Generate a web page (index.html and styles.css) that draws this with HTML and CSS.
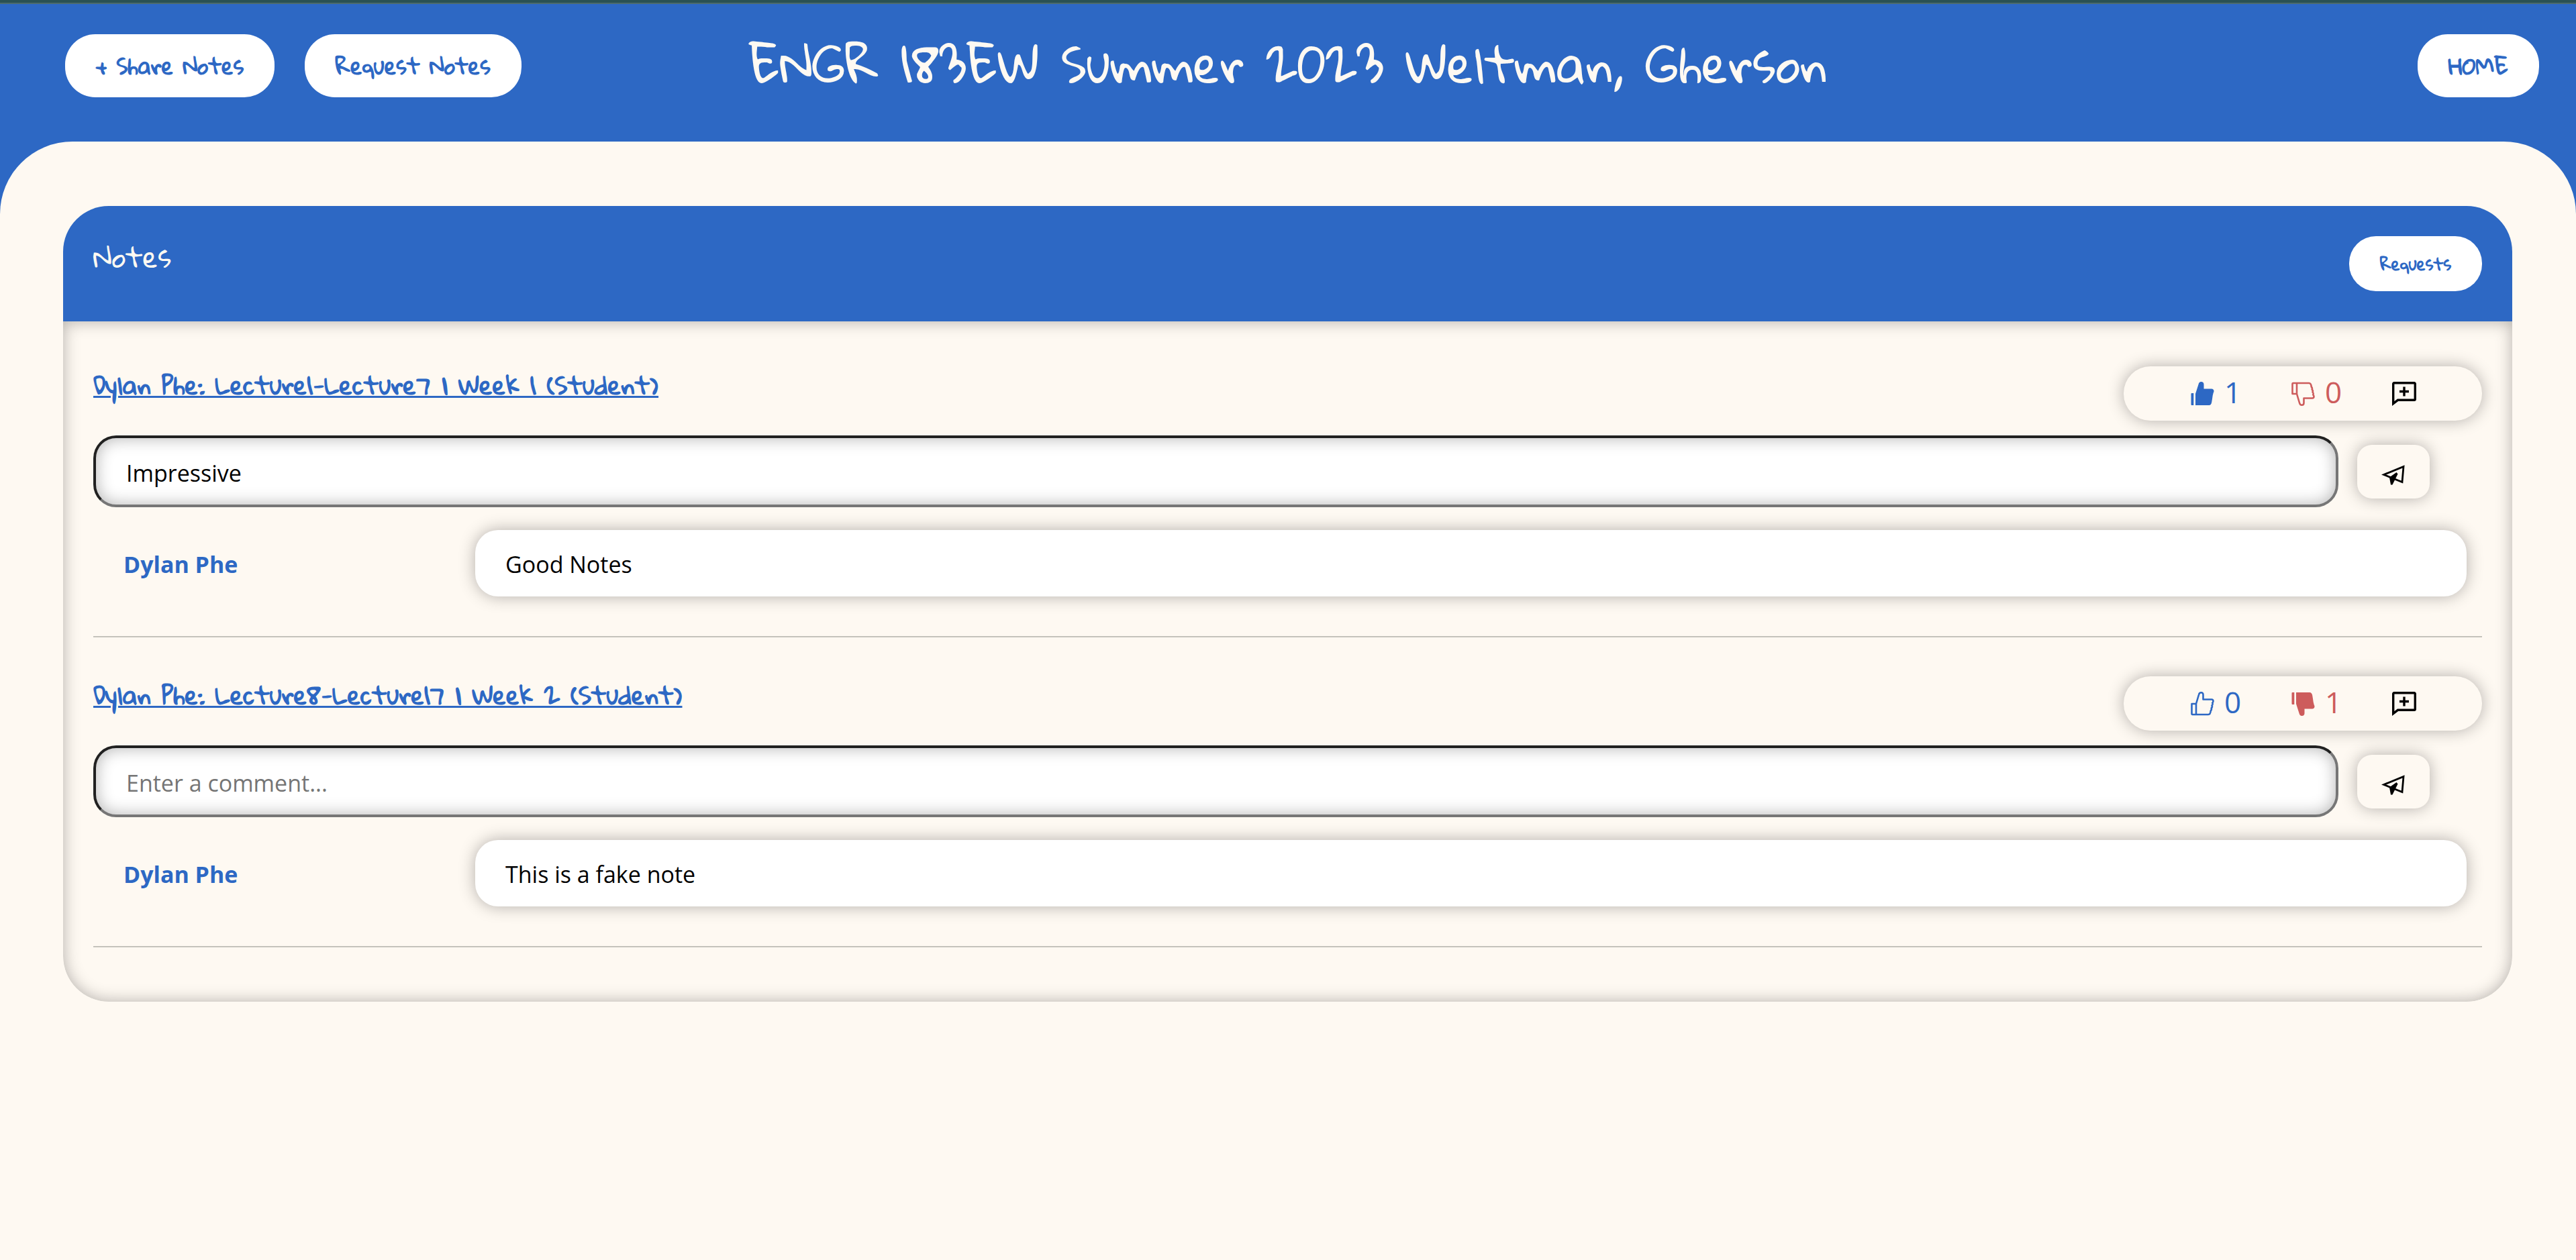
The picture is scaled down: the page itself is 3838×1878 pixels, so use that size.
FILE: index.html
```html
<!DOCTYPE html>
<html lang="en">
<head>
  <meta charset="utf-8">
  <meta name="viewport" content="width=device-width, initial-scale=1">
  <title>ENGR 183EW Summer 2023 Weltman, Gherson</title>
  <link rel="stylesheet" href="styles.css">
</head>
<body>
  <svg class="sprite" aria-hidden="true">
    <symbol id="thumb-fill" viewBox="0 0 36 36">
      <path fill="currentColor" d="M1 17h3.300v18H1.500a1 1 0 0 1-1-1V18zM7 35V18l4.500-14C12 1.500 13.500 0 15.500 0c2.500 0 4 1.500 4 4v6.500H31c2 0 3.500 1.500 3.500 3.500 0 1-.3 1.700-.8 2.500l-1 4-.7 5-.8 5c-.5 3-2 4.500-4 4.500z"/>
    </symbol>
    <symbol id="thumb-line" viewBox="0 0 36 36">
      <path fill="none" stroke="currentColor" stroke-width="2.600" stroke-linejoin="round" d="M1.500 18H8v16H2.500a1 1 0 0 1-1-1zM8 18l4-13.500C12.500 2.500 13.500 1.300 15.500 1.300c2 0 3 1.500 3 3.200V11.500H31c1.500 0 2.500 1 2.500 2.500s-.5 2-1.300 2.500c.8 1 .5 3-.7 4 .7 1.300.3 3-.8 4 .5 1.300 0 3-1 4C29.500 31.500 28.500 34 26 34H8"/>
    </symbol>
    <symbol id="comment-add" viewBox="0 0 36 36">
      <path fill="none" stroke="currentColor" stroke-width="3.400" d="M1.700 32.500V3A1.300 1.300 0 0 1 3 1.700h30A1.300 1.300 0 0 1 34.300 3v23a1.300 1.300 0 0 1-1.300 1.300H8.500zM18 7.500v14M11 14.500h14"/>
    </symbol>
    <symbol id="send" viewBox="0 0 36 30">
      <path fill="none" stroke="currentColor" stroke-width="2.800" d="M3.500 14.500 33 2.500 31 25.500z"/>
      <path fill="currentColor" d="M22.500 11 12 18.500 14 29.500h2.500L20 22.500l4.500-9z"/>
    </symbol>
  </svg>

  <header class="topbar">
    <nav class="topbar-actions">
      <button class="pill-button" type="button">+ Share Notes</button>
      <button class="pill-button" type="button">Request Notes</button>
    </nav>
    <h1 class="course-title">ENGR 183EW Summer 2023 Weltman, Gherson</h1>
    <nav class="topbar-home">
      <button class="pill-button" type="button">HOME</button>
    </nav>
  </header>

  <main class="page">
    <section class="card">
      <header class="card-header">
        <h2 class="card-title">Notes</h2>
        <button class="pill-button pill-button-small" type="button">Requests</button>
      </header>
      <div class="card-body">
        <article class="note">
          <div class="note-head">
            <a class="note-link" href="#note-1">Dylan Phe: Lecture1-Lecture7 | Week 1 (Student)</a>
            <div class="reactions">
              <button class="reaction like" type="button" aria-label="Like"><svg class="icon"><use href="#thumb-fill"/></svg><span>1</span></button>
              <button class="reaction dislike" type="button" aria-label="Dislike"><svg class="icon flip"><use href="#thumb-line"/></svg><span>0</span></button>
              <button class="reaction comment-toggle" type="button" aria-label="Add comment"><svg class="icon"><use href="#comment-add"/></svg></button>
            </div>
          </div>
          <form class="comment-form">
            <input class="comment-input" type="text" aria-label="Comment" placeholder="Enter a comment..." value="Impressive">
            <button class="send-button" type="button" aria-label="Send"><svg class="send-icon"><use href="#send"/></svg></button>
          </form>
          <div class="comment">
            <strong class="comment-author">Dylan Phe</strong>
            <p class="comment-text">Good Notes</p>
          </div>
        </article>
        <article class="note">
          <div class="note-head">
            <a class="note-link" href="#note-2">Dylan Phe: Lecture8-Lecture17 | Week 2 (Student)</a>
            <div class="reactions">
              <button class="reaction like" type="button" aria-label="Like"><svg class="icon"><use href="#thumb-line"/></svg><span>0</span></button>
              <button class="reaction dislike" type="button" aria-label="Dislike"><svg class="icon flip"><use href="#thumb-fill"/></svg><span>1</span></button>
              <button class="reaction comment-toggle" type="button" aria-label="Add comment"><svg class="icon"><use href="#comment-add"/></svg></button>
            </div>
          </div>
          <form class="comment-form">
            <input class="comment-input" type="text" aria-label="Comment" placeholder="Enter a comment...">
            <button class="send-button" type="button" aria-label="Send"><svg class="send-icon"><use href="#send"/></svg></button>
          </form>
          <div class="comment">
            <strong class="comment-author">Dylan Phe</strong>
            <p class="comment-text">This is a fake note</p>
          </div>
        </article>
      </div>
    </section>
  </main>
</body>
</html>
```
FILE: styles.css
```css
:root {
  --blue: #2d68c4;
  --red: #cd5c5c;
  --cream: #fef9f2;
  --shadow: rgba(0, 0, 0, 0.3);
  --hand: "Gloria Hallelujah", Lato, sans-serif;
  --text: "Segoe UI", "Open Sans", sans-serif;
}

* {
  box-sizing: border-box;
}

body {
  margin: 0;
  min-height: 100vh;
  display: flex;
  flex-direction: column;
  background: var(--blue);
  border-top: 4px solid #2a5153;
  font-family: var(--text);
  font-size: 34px;
  line-height: 48px;
  color: #000;
}

button,
input {
  font: inherit;
  color: inherit;
  margin: 0;
}

button {
  border: 0;
  cursor: pointer;
}

h1,
h2,
p {
  margin: 0;
  font-weight: 400;
}

.sprite {
  position: absolute;
  width: 0;
  height: 0;
}

/* Top bar */

.topbar {
  display: grid;
  grid-template-columns: 1fr auto 1fr;
  align-items: start;
  padding: 45px 0 66px;
  border-top: 2px solid #4b6b6d;
}

.topbar-actions {
  display: flex;
  gap: 45px;
  padding-left: 97px;
}

.topbar-home {
  display: flex;
  justify-content: flex-end;
  padding-right: 55px;
}

.course-title {
  font-family: var(--hand);
  font-size: 72px;
  line-height: 88px;
  color: var(--cream);
}

.pill-button {
  padding: 23px 46px;
  border-radius: 45px;
  background: #fff;
  color: var(--blue);
  font-family: var(--hand);
  font-size: 32px;
  font-weight: 700;
  line-height: 48px;
  white-space: nowrap;
}

.pill-button-small {
  padding: 17px 46px;
  border-radius: 40px;
  font-size: 24px;
}

/* Notes card */

.page {
  flex: 1;
  padding: 96px 95px 96px 94px;
  border-radius: 108px 108px 0 0;
  background: var(--cream);
}

.card {
  border-radius: 68px;
  overflow: hidden;
}

.card-header {
  display: flex;
  justify-content: space-between;
  align-items: flex-start;
  padding: 45px;
  background: var(--blue);
}

.card-title {
  font-family: var(--hand);
  font-size: 41px;
  line-height: 60px;
  color: var(--cream);
}

.card-body {
  padding: 67px 45px 81px;
  border-radius: 0 0 68px 68px;
  box-shadow: inset 0 0 24px var(--shadow);
}

/* One shared note */

.note {
  padding-bottom: 59px;
  border-bottom: 2px solid #c5c3bc;
}

.note + .note {
  margin-top: 58px;
}

.note-head {
  display: flex;
  justify-content: space-between;
  align-items: flex-start;
}

.note-link {
  font-family: var(--hand);
  font-size: 36px;
  font-weight: 700;
  line-height: 54px;
  color: var(--blue);
  text-decoration-thickness: 3px;
}

.reactions {
  display: flex;
  align-items: center;
  gap: 54px;
  height: 81px;
  padding: 0 98px 0 100px;
  border-radius: 40px;
  background: var(--cream);
  box-shadow: 0 0 24px var(--shadow);
}

.reaction {
  display: flex;
  align-items: center;
  gap: 14px;
  width: 96px;
  padding: 0;
  background: none;
  font-size: 44px;
}

.reaction span {
  margin-bottom: 6px;
}

.like {
  color: var(--blue);
}

.dislike {
  color: var(--red);
}

.comment-toggle {
  width: 36px;
}

.icon {
  width: 36px;
  height: 36px;
}

.flip {
  transform: scaleY(-1);
}

.comment-form {
  display: flex;
  align-items: center;
  gap: 28px;
  margin-top: 22px;
  padding-right: 78px;
}

.comment-input {
  flex: 1;
  min-width: 0;
  height: 107px;
  padding: 4px 45px 0;
  border: 4px solid;
  border-color: #212121 #767676 #767676 #212121;
  border-radius: 34px;
  background: #fff;
  box-shadow: inset 0 0 24px var(--shadow);
}

.comment-input::placeholder {
  color: #757575;
  opacity: 1;
}

.send-button {
  display: flex;
  justify-content: center;
  padding: 30px 0 20px;
  width: 108px;
  border-radius: 22px;
  background: var(--cream);
  box-shadow: 0 0 24px var(--shadow);
}

.send-icon {
  width: 36px;
  height: 30px;
}

.comment {
  display: grid;
  grid-template-columns: 524px 1fr;
  column-gap: 45px;
  align-items: center;
  margin-top: 34px;
  padding-right: 23px;
}

.comment-author {
  padding-left: 45px;
  padding-top: 2px;
  color: var(--blue);
}

.comment-text {
  padding: 27px 45px 24px;
  border-radius: 34px;
  background: #fff;
  box-shadow: 0 0 24px var(--shadow);
}
```
